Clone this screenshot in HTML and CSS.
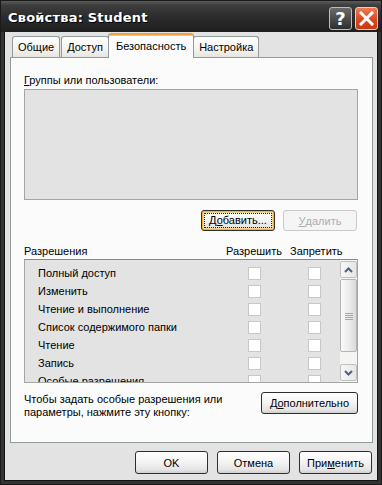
FILE: index.html
```html
<!DOCTYPE html>
<html lang="ru">
  <head>
    <meta charset="utf-8" />
    <title>Свойства: Student</title>
    <link rel="stylesheet" href="styles.css">
  </head>
  <body>
    <div class="window">
      <!-- title bar -->
      <div class="titlebar">
        <span class="titlebar__text">Свойства: Student</span>
        <span class="titlebar__btn titlebar__btn--help">?</span>
        <span class="titlebar__btn titlebar__btn--close">
          <svg width="15" height="15" viewBox="0 0 15 15">
            <path d="M2 2 L13 13 M13 2 L2 13" stroke="#fff" stroke-width="3" stroke-linecap="square" />
          </svg>
        </span>
      </div>

      <div class="client">
        <!-- tabs -->
        <div class="tabs">
          <span class="tab">Общие</span>
          <span class="tab">Доступ</span>
          <span class="tab tab--active">Безопасность</span>
          <span class="tab">Настройка</span>
        </div>

        <div class="panel">
          <div class="label"><u>Г</u>руппы или пользователи:</div>
          <div class="groups"></div>

          <div class="btn-row">
            <span class="btn btn--focus"><span class="btn__focus">Д<u>о</u>бавить...</span></span>
            <span class="btn btn--disabled"><u>У</u>далить</span>
          </div>

          <div class="perm-head">
            <span class="perm-head__name">Разрешения</span>
            <span class="perm-head__allow">Разрешить</span>
            <span class="perm-head__deny">Запретить</span>
          </div>

          <div class="perm-list">
            <div class="perm-rows">
              <div class="perm"><span class="perm__name">Полный доступ</span><span class="check"></span><span class="check"></span></div>
              <div class="perm"><span class="perm__name">Изменить</span><span class="check"></span><span class="check"></span></div>
              <div class="perm"><span class="perm__name">Чтение и выполнение</span><span class="check"></span><span class="check"></span></div>
              <div class="perm"><span class="perm__name">Список содержимого папки</span><span class="check"></span><span class="check"></span></div>
              <div class="perm"><span class="perm__name">Чтение</span><span class="check"></span><span class="check"></span></div>
              <div class="perm"><span class="perm__name">Запись</span><span class="check"></span><span class="check"></span></div>
              <div class="perm"><span class="perm__name">Особые разрешения</span><span class="check"></span><span class="check"></span></div>
            </div>
            <div class="scroll">
              <span class="scroll__btn">
                <svg width="9" height="6" viewBox="0 0 9 6"><path d="M1 5 L4.5 1.5 L8 5" fill="none" stroke="#4d6185" stroke-width="2" /></svg>
              </span>
              <span class="scroll__thumb">
                <svg width="8" height="8" viewBox="0 0 8 8"><path d="M0 1.5 H8 M0 3.5 H8 M0 5.5 H8 M0 7.5 H8" stroke="#a8a8a8" stroke-width="1" /></svg>
              </span>
              <span class="scroll__track"></span>
              <span class="scroll__btn">
                <svg width="9" height="6" viewBox="0 0 9 6"><path d="M1 1 L4.5 4.5 L8 1" fill="none" stroke="#4d6185" stroke-width="2" /></svg>
              </span>
            </div>
          </div>

          <div class="advanced">
            <span class="advanced__text">Чтобы задать особые разрешения или параметры, нажмите эту кнопку:</span>
            <span class="btn btn--wide">Д<u>о</u>полнительно</span>
          </div>
        </div>

        <div class="footer">
          <span class="btn btn--footer">OK</span>
          <span class="btn btn--footer">Отмена</span>
          <span class="btn btn--footer">При<u>м</u>енить</span>
        </div>
      </div>
    </div>
  </body>
</html>
```

FILE: styles.css
```css
body {
  margin: 0;
  background: #fff;
  font-family: 'Liberation Sans', Arial, sans-serif;
  font-size: 11px;
  color: #000;
}

.window {
  width: 382px;
  height: 485px;
  box-sizing: border-box;
  background: #333;
  border: 1px solid #1a1a1a;
  display: flex;
  flex-direction: column;
}

/* title bar */
.titlebar {
  height: 31px;
  display: flex;
  align-items: center;
  padding: 0 3px 0 7px;
  background: linear-gradient(#5c5c5c 0px, #3e3e3e 4px, #2c2c2c 16px, #1e1e1e 31px);
}

.titlebar__text {
  flex: 1;
  color: #fff;
  font-family: 'DejaVu Sans', sans-serif;
  font-weight: bold;
  font-size: 13px;
  letter-spacing: 0.2px;
  text-shadow: 1px 1px #000;
  padding-top: 2px;
}

.titlebar__btn {
  width: 21px;
  height: 21px;
  border: 1px solid #bdbdbd;
  border-radius: 3px;
  display: flex;
  align-items: center;
  justify-content: center;
  margin-left: 3px;
  margin-top: 3px;
}

.titlebar__btn--help {
  background: linear-gradient(#6a6a6a, #2e2e2e);
  color: #fff;
  font-family: 'DejaVu Sans', sans-serif;
  font-weight: bold;
  font-size: 18px;
}

.titlebar__btn--close {
  background: linear-gradient(#f07a52, #d9431c 60%, #c83a16);
  border-color: #e8cdc4;
}

/* client area */
.client {
  flex: 1;
  margin: 0 3px 3px;
  background: #e3e3e3;
  border-left: 1px solid #111;
  border-right: 1px solid #111;
  border-bottom: 1px solid #111;
  display: flex;
  flex-direction: column;
}

.tabs {
  display: flex;
  align-items: flex-end;
  height: 25px;
  padding-left: 7px;
  position: relative;
  z-index: 1;
}

.tab {
  height: 21px;
  box-sizing: border-box;
  padding: 3px 5px 0 5px;
  margin-right: 1px;
  border: 1px solid #919b9c;
  border-bottom: none;
  border-radius: 3px 3px 0 0;
  background: linear-gradient(#fefefe, #f4f3ee 60%, #e6e5df);
  line-height: 15px;
}

.tab--active {
  height: 25px;
  margin: 0 -1px 0 -2px;
  padding: 4px 7px 0 7px;
  border-top: 2px solid #f1a13c;
  background: #fcfcfe;
  position: relative;
  top: 1px;
  box-shadow: inset 0 1px #ffc85a;
}

.panel {
  height: 386px;
  box-sizing: border-box;
  margin: 0 4px 0 5px;
  border: 1px solid #919b9c;
  background: #fbfbfb;
  padding: 15px 14px 0 13px;
}

.label {
  line-height: 15px;
}

.groups {
  height: 111px;
  margin-top: 1px;
  box-sizing: border-box;
  border: 1px solid #a5a5a5;
  background: #e3e3e3;
}

.btn-row {
  display: flex;
  justify-content: flex-end;
  gap: 8px;
  margin-top: 10px;
  padding-right: 1px;
}

/* buttons */
.btn {
  width: 74px;
  height: 21px;
  box-sizing: border-box;
  border: 1px solid #2e2e2e;
  border-radius: 3px;
  background: linear-gradient(#ffffff, #f3f3f3 50%, #e4e4e4 85%, #cfcfcf);
  display: flex;
  align-items: center;
  justify-content: center;
}

.btn--focus {
  box-shadow: inset 0 0 0 1px #f8b330, inset 0 0 0 2px #fbd47e;
}

.btn__focus {
  border: 1px dotted #222;
  padding: 0 4px;
  line-height: 13px;
}

.btn--disabled {
  border-color: #c9c9c9;
  background: #f5f5f5;
  color: #acacac;
}

.btn--wide {
  width: 97px;
  height: 22px;
}

/* permissions */
.perm-head {
  display: flex;
  margin-top: 12px;
  line-height: 16px;
}

.perm-head__name {
  width: 202px;
}

.perm-head__allow {
  width: 64px;
}

.perm-list {
  height: 124px;
  box-sizing: border-box;
  border: 1px solid #a5a5a5;
  border-top-color: #888;
  background: #e3e3e3;
  display: flex;
  overflow: hidden;
}

.perm-rows {
  flex: 1;
  padding-top: 4px;
}

.perm {
  display: grid;
  grid-template-columns: 223px 13px 47px 13px;
  align-items: center;
  height: 18px;
}

.perm__name {
  padding-left: 13px;
  grid-column: 1;
}

.check {
  width: 13px;
  height: 13px;
  box-sizing: border-box;
  border: 1px solid #c7c7c7;
  background: #fff;
}

.perm .check:last-child {
  grid-column: 4;
}

.scroll {
  width: 17px;
  display: flex;
  flex-direction: column;
  background: #f4f4f2;
  padding: 1px 0;
}

.scroll__btn {
  height: 17px;
  box-sizing: border-box;
  border: 1px solid #c0c0c0;
  border-radius: 2px;
  background: linear-gradient(90deg, #f7f7f7, #e6e6e6);
  display: flex;
  align-items: center;
  justify-content: center;
}

.scroll__thumb {
  height: 73px;
  margin-top: 1px;
  box-sizing: border-box;
  border: 1px solid #b4b4b4;
  border-radius: 2px;
  background: linear-gradient(90deg, #fafafa, #ededed 50%, #dadada);
  display: flex;
  align-items: center;
  justify-content: center;
}

.scroll__track {
  flex: 1;
}

.advanced {
  display: flex;
  align-items: flex-start;
  margin-top: 9px;
}

.advanced__text {
  flex: 1;
  line-height: 13px;
  padding-top: 1px;
  padding-right: 30px;
}

/* footer */
.footer {
  display: flex;
  justify-content: flex-end;
  gap: 9px;
  padding: 8px 5px 0 0;
}

.btn--footer {
  width: 73px;
  height: 23px;
}
```
